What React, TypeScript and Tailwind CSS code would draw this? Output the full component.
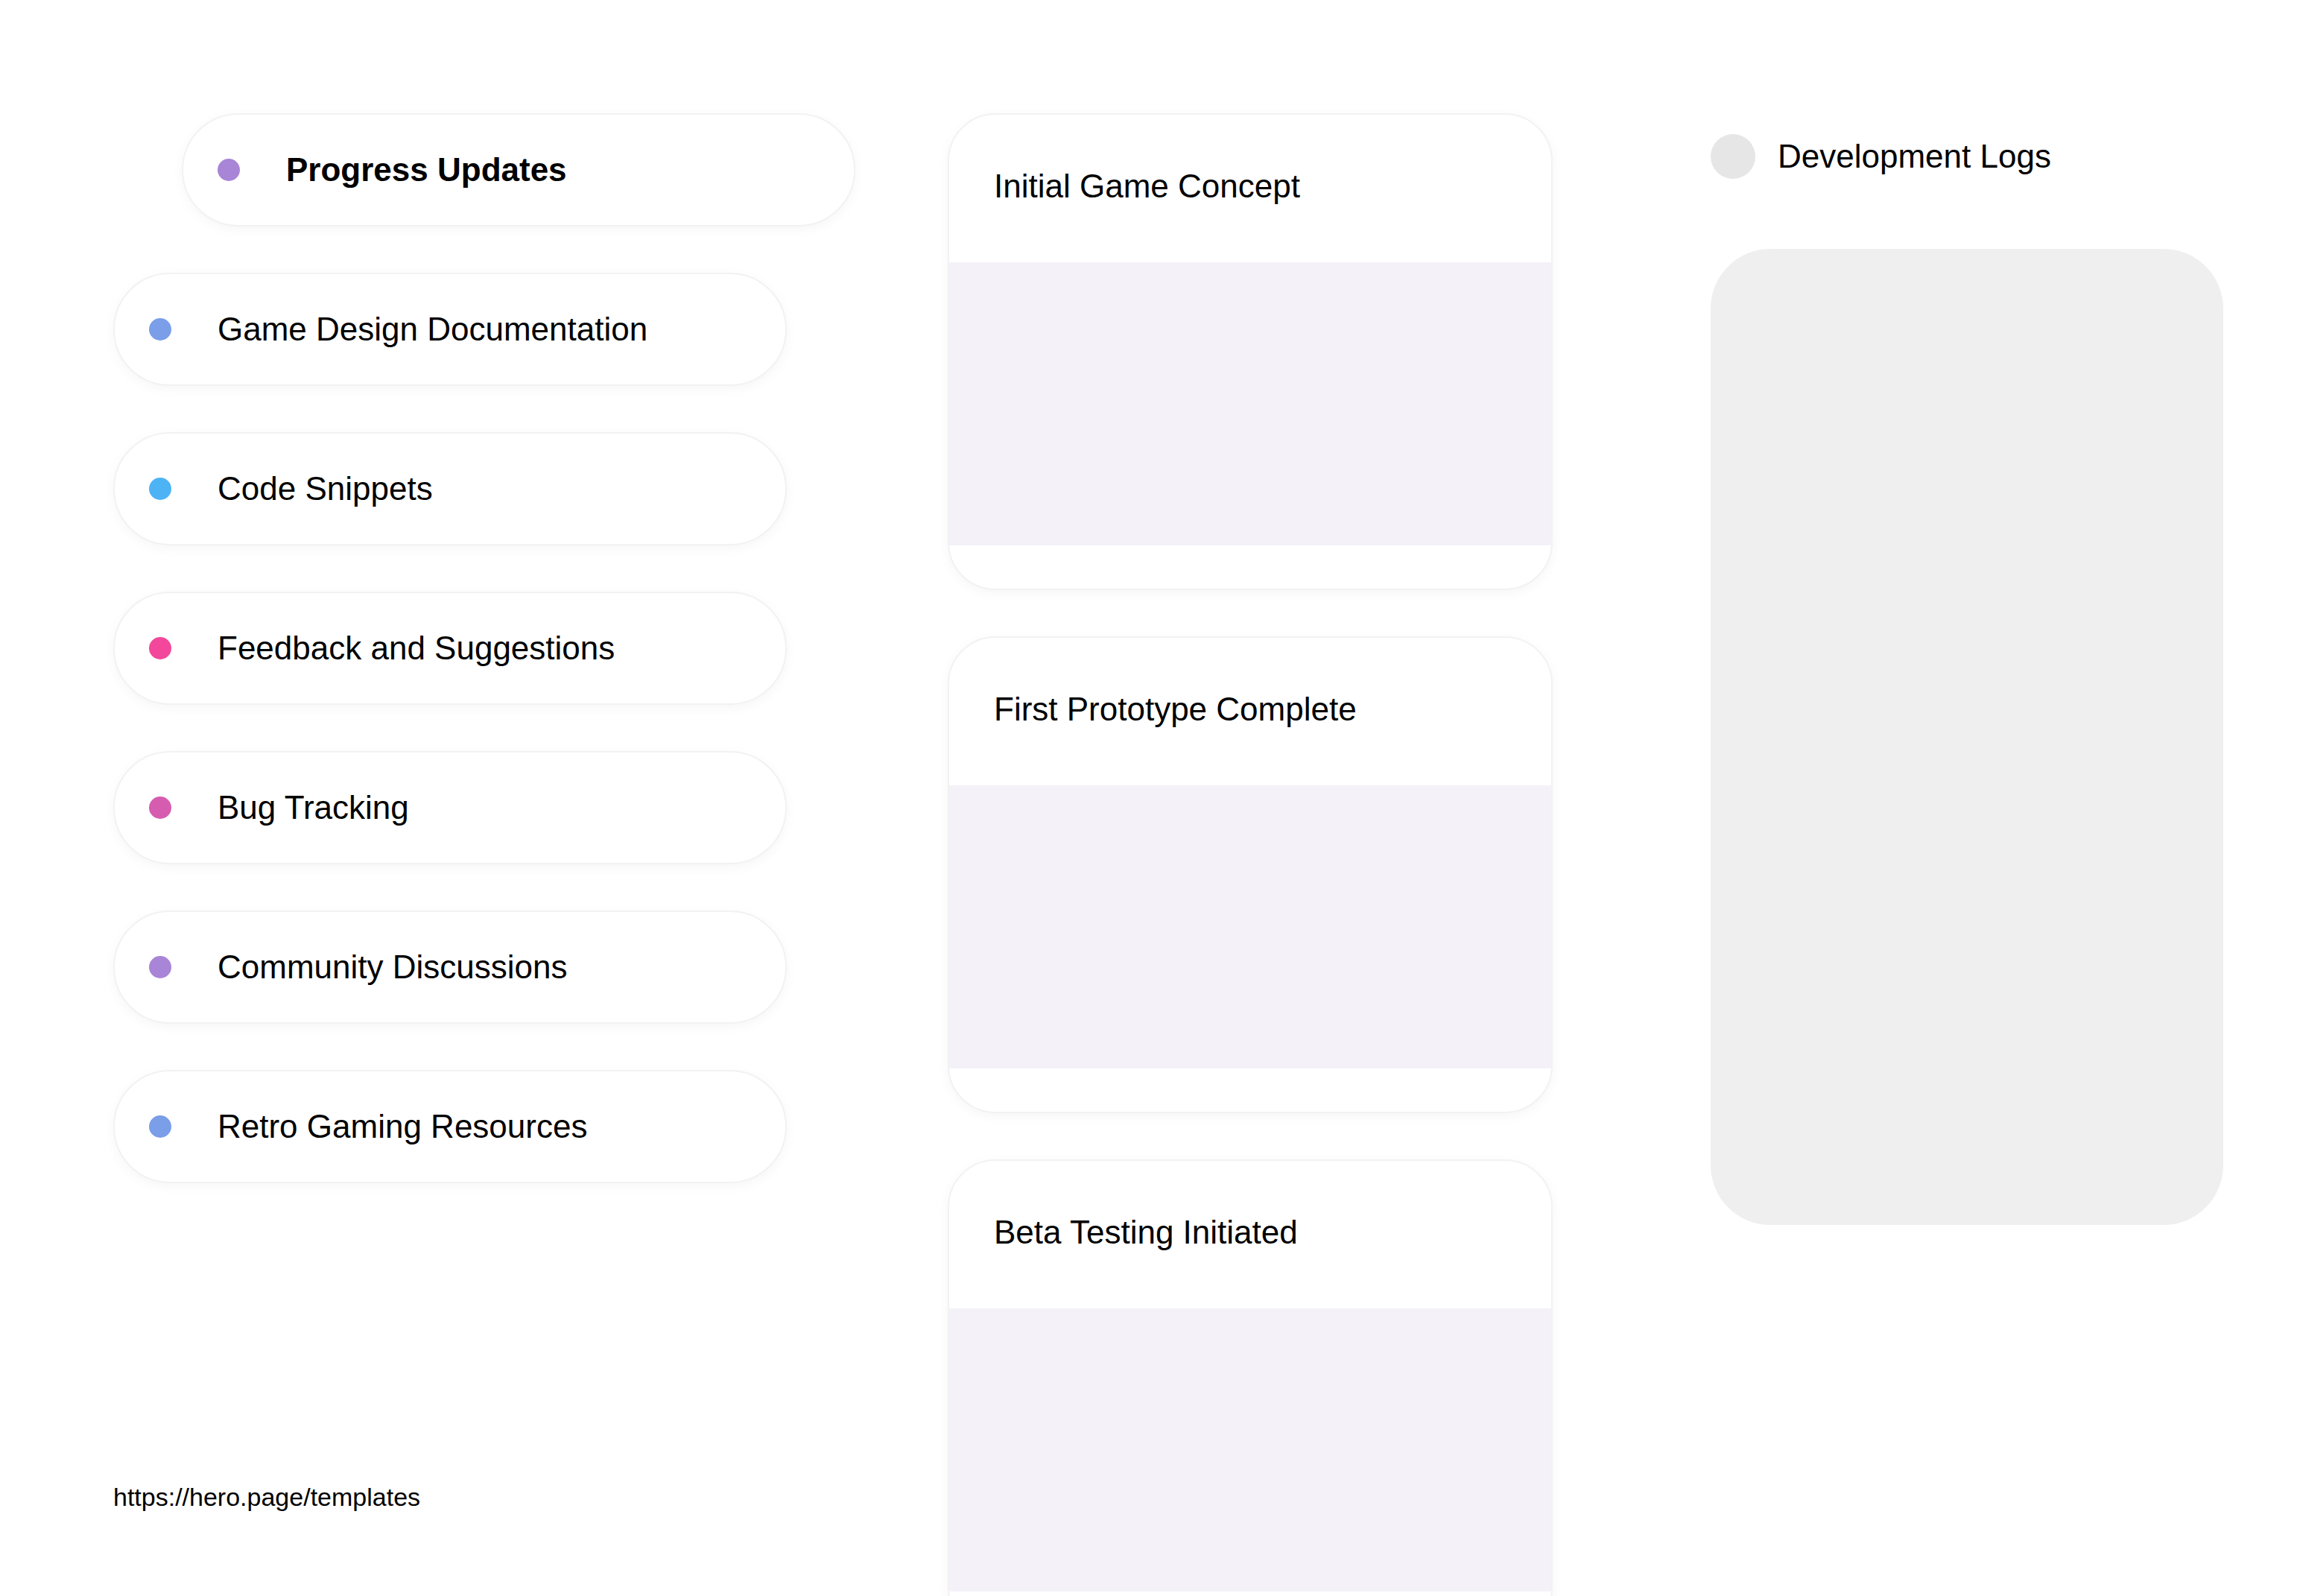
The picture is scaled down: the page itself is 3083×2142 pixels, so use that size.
const pills = [
  { label: 'Game Design Documentation', color: 'bg-[#7a9ee8]' },
  { label: 'Code Snippets', color: 'bg-[#4db3f5]' },
  { label: 'Feedback and Suggestions', color: 'bg-[#f2479a]' },
  { label: 'Bug Tracking', color: 'bg-[#d65cb0]' },
  { label: 'Community Discussions', color: 'bg-[#a885d6]' },
  { label: 'Retro Gaming Resources', color: 'bg-[#7a9ee8]' },
];

const milestones = ['Initial Game Concept', 'First Prototype Complete', 'Beta Testing Initiated'];

export default function App() {
  return (
    <div className="w-[3083px] h-[2142px] overflow-hidden bg-white font-[family-name:Liberation_Sans,Arial,sans-serif] text-black">
      <div className="flex pl-[152px] pt-[152px]">
        {/* Categories */}
        <div className="flex flex-col w-[1120px] shrink-0">
          <div className="ml-[92px] w-[904px] h-[152px] rounded-full bg-white border-2 border-[#f2f2f2] shadow-[0_4px_16px_rgba(0,0,0,0.04)] flex items-center pl-[46px]">
            <span className="w-[30px] h-[30px] rounded-full bg-[#a885d6]" />
            <span className="ml-[62px] text-[44px] font-bold">Progress Updates</span>
          </div>
          {pills.map((p) => (
            <div
              key={p.label}
              className="mt-[62px] w-[904px] h-[152px] rounded-full bg-white border-2 border-[#f2f2f2] shadow-[0_4px_16px_rgba(0,0,0,0.04)] flex items-center pl-[46px]"
            >
              <span className={`w-[30px] h-[30px] rounded-full ${p.color}`} />
              <span className="ml-[62px] text-[44px]">{p.label}</span>
            </div>
          ))}
          <div className="mt-[396px] text-[34px]">https://hero.page/templates</div>
        </div>

        {/* Milestones */}
        <div className="flex flex-col gap-[62px] w-[812px] shrink-0">
          {milestones.map((m) => (
            <div
              key={m}
              className="h-[640px] rounded-[64px] bg-white border-2 border-[#f2f2f2] shadow-[0_4px_16px_rgba(0,0,0,0.04)] overflow-hidden flex flex-col"
            >
              <div className="h-[198px] flex items-center pl-[60px] pb-[6px] text-[44px]">{m}</div>
              <div className="h-[380px] bg-[#f4f2f8]" />
            </div>
          ))}
        </div>

        {/* Logs */}
        <div className="ml-[212px] w-[688px] shrink-0">
          <div className="flex items-center h-[120px] -mt-[2px]">
            <span className="w-[60px] h-[60px] rounded-full bg-[#e6e6e6]" />
            <span className="ml-[30px] text-[44px]">Development Logs</span>
          </div>
          <div className="mt-[64px] h-[1310px] rounded-[80px] bg-[#efefef]" />
        </div>
      </div>
    </div>
  );
}
